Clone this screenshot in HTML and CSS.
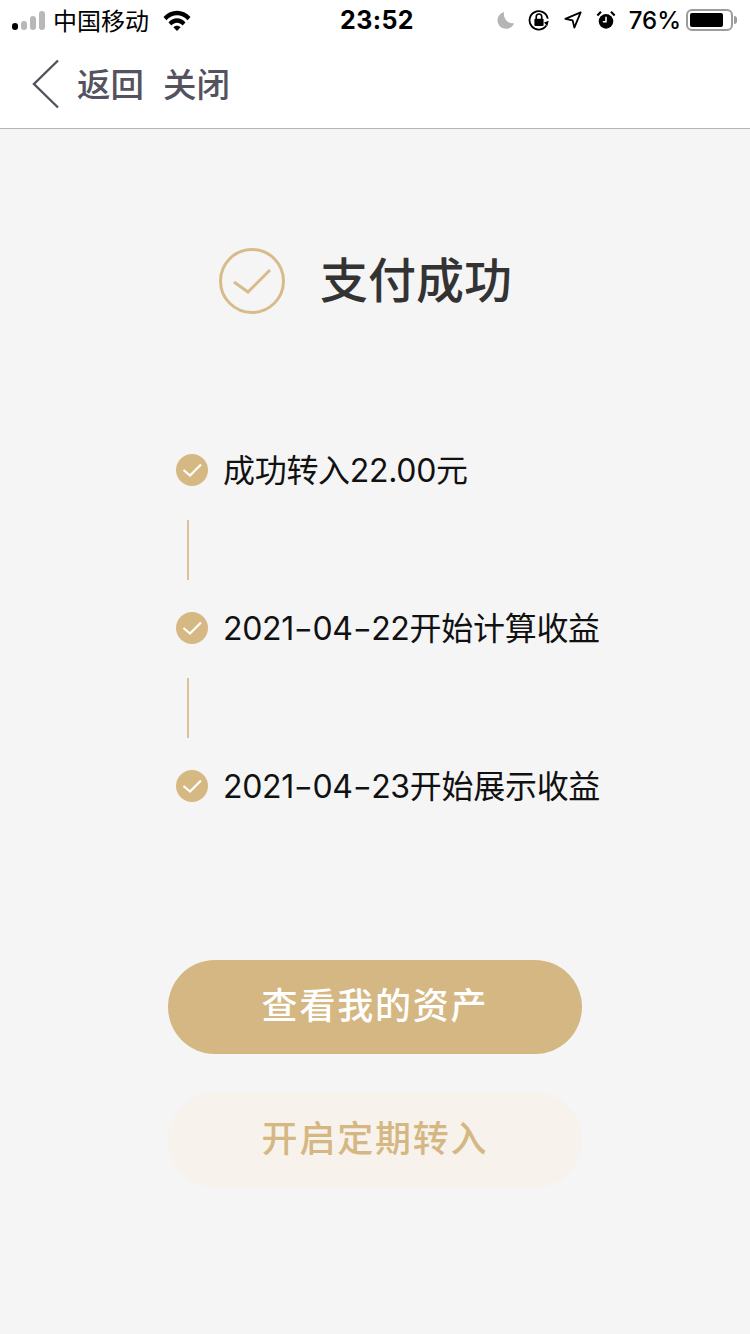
FILE: index.html
```html
<!DOCTYPE html>
<html lang="zh-CN">
  <head>
    <meta charset="UTF-8" />
    <meta name="viewport" content="width=device-width, initial-scale=1.0" />
    <title>支付成功</title>
    <link rel="stylesheet" href="styles.css">
  </head>
  <body>
    <div class="statusbar">
      <div class="status-left">
        <div class="signal">
          <span class="on"></span><span></span><span></span><span></span>
        </div>
        <span class="carrier">中国移动</span>
        <svg class="wifi" width="28" height="21" viewBox="0 0 28 21">
          <path d="M0.5 7 C8 -1.5 20 -1.5 27.5 7 L24.6 10.2 C18.6 3.6 9.4 3.6 3.4 10.2 Z" fill="#000"/>
          <path d="M5.5 12.4 C10.5 7 17.5 7 22.5 12.4 L19.6 15.5 C16.2 11.9 11.8 11.9 8.4 15.5 Z" fill="#000"/>
          <path d="M10.4 17.2 C12.4 15.2 15.6 15.2 17.6 17.2 L14 21 Z" fill="#000"/>
        </svg>
      </div>
      <div class="time">23:52</div>
      <div class="status-right">
        <svg class="moon" width="18" height="18" viewBox="0 0 20 20">
          <path d="M8 1 A9.5 9.5 0 1 0 19 13.5 A10 10 0 0 1 8 1 Z" fill="#b5b5b5"/>
        </svg>
        <svg class="lock" width="22" height="22" viewBox="0 0 24 24" fill="none">
          <path d="M21.5 10.5 A10 10 0 1 0 20 18" stroke="#000" stroke-width="2"/>
          <path d="M18 14 L23.5 14 L20 19 Z" fill="#000" transform="rotate(-20 20 16)"/>
          <rect x="7" y="10.5" width="10" height="8" rx="1" fill="#000"/>
          <path d="M9 11 V8.5 A3 3 0 0 1 15 8.5 V11" stroke="#000" stroke-width="1.8"/>
        </svg>
        <svg class="arrow" width="18" height="18" viewBox="0 0 20 20" fill="none">
          <path d="M18.5 1.5 L1.5 8.8 L9.6 10.4 L11.5 18.5 Z" stroke="#000" stroke-width="2" stroke-linejoin="round"/>
        </svg>
        <svg class="alarm" width="20" height="20" viewBox="0 0 22 22">
          <circle cx="11" cy="12.5" r="8" fill="#000"/>
          <path d="M11 7.5 V13 H7.5" stroke="#fff" stroke-width="1.7" fill="none"/>
          <path d="M1.5 6 L5.5 1.8 M20.5 6 L16.5 1.8" stroke="#000" stroke-width="2.4"/>
        </svg>
        <span class="percent">76%</span>
        <div class="battery">
          <div class="battery-body"><div class="battery-level"></div></div>
          <div class="battery-tip"></div>
        </div>
      </div>
    </div>

    <div class="navbar">
      <svg class="back" width="28" height="50" viewBox="0 0 28 50" fill="none">
        <path d="M26 1.5 L2 25 L26 48.5" stroke="#55525f" stroke-width="2.4"/>
      </svg>
      <span class="nav-link">返回</span>
      <span class="nav-link">关闭</span>
    </div>

    <div class="content">
      <div class="result">
        <svg width="66" height="66" viewBox="0 0 66 66" fill="none">
          <circle cx="33" cy="33" r="31.5" stroke="#d8bb8a" stroke-width="3"/>
          <path d="M15 34 L29 44 L51 22" stroke="#d8bb8a" stroke-width="3"/>
        </svg>
        <h1 class="result-title">支付成功</h1>
      </div>

      <div class="steps">
        <div class="step">
          <svg class="step-icon" width="32" height="32" viewBox="0 0 32 32">
            <circle cx="16" cy="16" r="16" fill="#d6b883"/>
            <path d="M7.5 16 L14 21.5 L25 10.5" stroke="#fff" stroke-width="2.2" fill="none"/>
          </svg>
          <span class="step-text">成功转入22.00元</span>
        </div>
        <div class="step-line"></div>
        <div class="step">
          <svg class="step-icon" width="32" height="32" viewBox="0 0 32 32">
            <circle cx="16" cy="16" r="16" fill="#d6b883"/>
            <path d="M7.5 16 L14 21.5 L25 10.5" stroke="#fff" stroke-width="2.2" fill="none"/>
          </svg>
          <span class="step-text">2021<span class="dash">-</span>04<span class="dash">-</span>22开始计算收益</span>
        </div>
        <div class="step-line"></div>
        <div class="step">
          <svg class="step-icon" width="32" height="32" viewBox="0 0 32 32">
            <circle cx="16" cy="16" r="16" fill="#d6b883"/>
            <path d="M7.5 16 L14 21.5 L25 10.5" stroke="#fff" stroke-width="2.2" fill="none"/>
          </svg>
          <span class="step-text">2021<span class="dash">-</span>04<span class="dash">-</span>23开始展示收益</span>
        </div>
      </div>

      <button class="btn btn-primary">查看我的资产</button>
      <button class="btn btn-light">开启定期转入</button>
    </div>
  </body>
</html>
```

FILE: styles.css
```css
body {
  margin: 0;
  height: 1334px;
  overflow: hidden;
  background: #f5f5f6;
  font-family: Inter, "Noto Sans CJK SC", sans-serif;
}
.statusbar {
  height: 40px;
  background: #fff;
  display: grid;
  grid-template-columns: 1fr auto 1fr;
  align-items: center;
  padding: 0 8px 0 12px;
  color: #000;
}
.status-left {
  display: flex;
  align-items: center;
}
.signal {
  display: flex;
  align-items: flex-end;
  gap: 3px;
}
.signal span {
  width: 6px;
  height: 9px;
  border-radius: 3px;
  background: #b8b8b8;
}
.signal span:nth-child(3) {
  height: 14px;
}
.signal span:nth-child(4) {
  height: 19px;
}
.signal span.on {
  height: 7px;
  background: #000;
}
.carrier {
  font-size: 24px;
  margin-left: 8px;
  padding-bottom: 2px;
}
.wifi {
  margin-left: 14px;
}
.time {
  font-size: 25px;
  font-weight: 700;
  letter-spacing: 0.4px;
  padding-bottom: 1px;
}
.status-right {
  display: flex;
  align-items: center;
  justify-content: flex-end;
  padding-right: 5px;
}
.moon {
  margin-right: 13px;
}
.lock,
.arrow {
  margin-right: 14px;
}
.alarm {
  margin-right: 13px;
}
.percent {
  font-size: 24px;
  font-weight: 500;
}
.battery {
  display: flex;
  align-items: center;
  margin-left: 5px;
}
.battery-body {
  width: 47px;
  height: 22px;
  box-sizing: border-box;
  padding: 2px;
  border: 2px solid #9c9c9c;
  border-radius: 6px;
}
.battery-level {
  width: 33px;
  height: 100%;
  background: #000;
  border-radius: 2px;
}
.battery-tip {
  width: 3px;
  height: 8px;
  margin-left: 1px;
  background: #9c9c9c;
  border-radius: 0 3px 3px 0;
}
.navbar {
  height: 88px;
  background: #fff;
  border-bottom: 1px solid #b4b4b4;
  display: flex;
  align-items: center;
  padding-left: 32px;
}
.nav-link {
  font-size: 33.5px;
  font-weight: 500;
  color: #55525f;
  margin-right: 19px;
  padding-bottom: 4px;
}
.back {
  margin-right: 17px;
}
.content {
  display: flex;
  flex-direction: column;
  align-items: center;
}
.result {
  display: flex;
  align-items: center;
  gap: 35px;
  margin-top: 119px;
  margin-right: 19px;
}
.result-title {
  margin: 0;
  line-height: 54px;
  font-size: 48px;
  font-weight: 500;
  color: #333;
}
.steps {
  width: 450px;
  margin-top: 134px;
  margin-left: 52px;
}
.step {
  display: flex;
  align-items: center;
  gap: 15px;
  height: 44px;
  font-size: 32px;
  letter-spacing: -0.3px;
  color: #111;
}
.step-text {
  padding-bottom: 4px;
}
.dash {
  display: inline-block;
  margin: 0 2px;
  transform: scaleX(1.3);
}
.step-line {
  width: 2px;
  height: 60px;
  margin: 28px 0 26px 11px;
  background: #dcc097;
}
.btn {
  display: block;
  width: 414px;
  padding: 0 0 8px;
  border: 0;
  border-radius: 48px;
  font-family: inherit;
  font-size: 36px;
  letter-spacing: 1.8px;
  font-weight: 500;
}
.btn-primary {
  height: 94px;
  margin-top: 152px;
  background: #d5b783;
  color: #fff;
}
.btn-light {
  height: 96px;
  margin-top: 38px;
  background: #f7f3ec;
  color: #d5b783;
}
```
